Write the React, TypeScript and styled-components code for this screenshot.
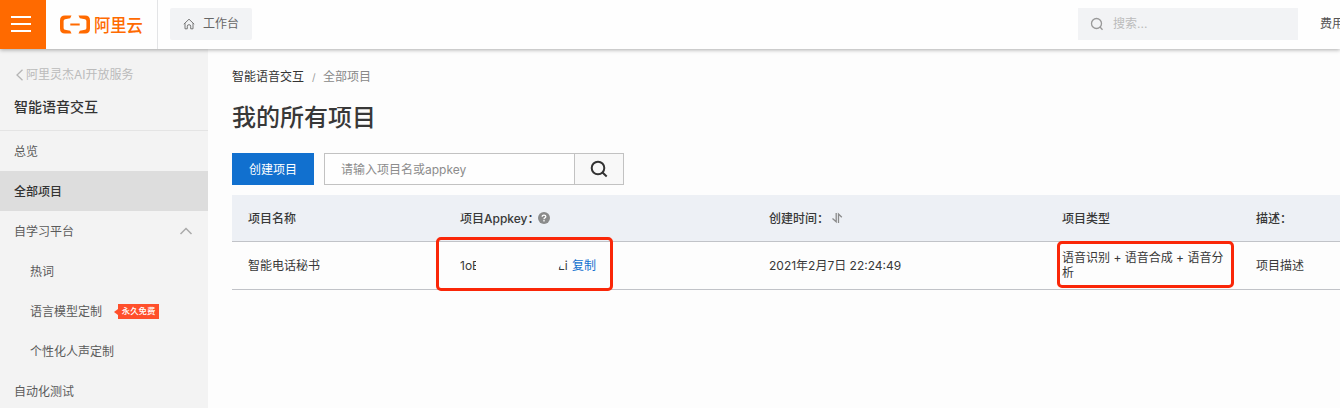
import React from "react";
import styled, { createGlobalStyle, css } from "styled-components";

const Global = createGlobalStyle`
  * { box-sizing: border-box; }
  html, body { margin: 0; padding: 0; overflow: hidden; }
  body {
    background: #fdfdfd;
    color: #383838;
    font: 12px/18px Inter, "Noto Sans CJK SC", sans-serif;
  }
`;

const Page = styled.div`
  width: 1340px;
  height: 408px;
  overflow: hidden;
  display: flex;
  flex-direction: column;
`;

const TopBar = styled.header`
  position: relative;
  z-index: 1;
  flex: none;
  height: 49px;
  display: flex;
  align-items: stretch;
  background: #fefefe;
  box-shadow: 0 1px 4px rgba(0, 0, 0, 0.32);
`;

const MenuButton = styled.button`
  width: 46px;
  border: 0;
  padding: 0 0 1px 11px;
  background: #ff6a00;
  display: flex;
  flex-direction: column;
  justify-content: center;
  gap: 5px;
`;

const MenuLine = styled.span`
  width: 20px;
  height: 2px;
  background: #fff;
`;

const Brand = styled.div`
  width: 112px;
  padding-left: 14px;
  display: flex;
  align-items: center;
  gap: 4px;
  border-right: 1px solid #e3e4e6;
  color: #ff6a00;
`;

const BrandName = styled.span`
  font-size: 16.3px;
  line-height: 24px;
  font-weight: 500;
  white-space: nowrap;
  transform: scaleY(1.1);
`;

const Workbench = styled.div`
  align-self: flex-start;
  margin: 8px 0 0 12px;
  width: 82px;
  height: 32px;
  padding-left: 13px;
  display: flex;
  align-items: center;
  gap: 8px;
  border-radius: 2px;
  background: #f2f3f5;
  color: #666;
`;

const GlobalSearch = styled.div`
  align-self: flex-start;
  margin: 8px 22px 0 auto;
  width: 220px;
  height: 32px;
  padding-left: 12px;
  display: flex;
  align-items: center;
  gap: 9px;
  background: #f2f3f5;
  color: #bbb;
`;

const Billing = styled.span`
  width: 20px;
  overflow: hidden;
  white-space: nowrap;
  line-height: 48px;
  color: #555;
`;

const Body = styled.div`
  flex: 1;
  display: flex;
  min-height: 0;
`;

const Sidebar = styled.nav`
  flex: none;
  width: 208px;
  background: #f3f3f3;
  color: #5a5a5a;
`;

const BackLink = styled.div`
  height: 38px;
  padding: 13px 0 0 15px;
  display: flex;
  align-items: center;
  gap: 2px;
  color: #bbb;
`;

const ServiceTitle = styled.div`
  height: 44px;
  padding: 9px 0 0 14px;
  border-bottom: 1px solid #e4e4e4;
  font-size: 14px;
  line-height: 22px;
  font-weight: 500;
  color: #333;
`;

const NavItem = styled.div<{ $active?: boolean; $nested?: boolean }>`
  height: 40px;
  padding: 2px 15px 0 ${(p) => (p.$nested ? 30 : 14)}px;
  display: flex;
  align-items: center;
  ${(p) =>
    p.$active &&
    css`
      background: #ddd;
      color: #333;
      font-weight: 500;
    `}
`;

const ChevronUp = styled.svg`
  margin: 0 0 2px auto;
`;

const FreeTag = styled.span`
  margin: 0 0 1px 12px;
  display: flex;
  align-items: center;
`;

const TagArrow = styled.svg`
  flex: none;
`;

const TagLabel = styled.span`
  width: 41px;
  height: 15px;
  background: #ff4f2b;
  color: #fff;
  font-size: 8.4px;
  line-height: 15px;
  font-weight: 500;
  text-align: center;
`;

const Main = styled.main`
  flex: 1;
  min-width: 0;
  padding-left: 24px;
`;

const Breadcrumb = styled.div`
  margin-top: 19px;
  display: flex;
  color: #333;
`;

const Slash = styled.span`
  width: 19px;
  padding-left: 8px;
  font-size: 10px;
  color: #999;
`;

const Current = styled.span`
  color: #888;
`;

const PageTitle = styled.h1`
  margin: 14px 0 0;
  font-size: 24px;
  line-height: 36px;
  font-weight: 500;
  color: #383838;
`;

const Toolbar = styled.div`
  margin-top: 17px;
  height: 32px;
  display: flex;
  gap: 10px;
`;

const CreateButton = styled.button`
  width: 82px;
  border: 0;
  padding: 1px 0 0;
  background: #1170cf;
  color: #fff;
  font: inherit;
`;

const SearchBox = styled.div`
  width: 300px;
  display: flex;
  border: 1px solid #c2c2c2;
`;

const SearchField = styled.span`
  flex: 1;
  padding-left: 16px;
  line-height: 31px;
  background: #fefefe;
  color: #8c8c8c;
`;

const SearchButton = styled.span`
  width: 49px;
  display: flex;
  align-items: center;
  justify-content: center;
  border-left: 1px solid #c2c2c2;
  background: #f8f8f8;
`;

const Row = styled.div<{ $head?: boolean }>`
  width: 1140px;
  height: ${(p) => (p.$head ? 47 : 48)}px;
  display: grid;
  grid-template-columns: 212px 309px 293px 194px 132px;
  align-items: center;
  border-bottom: 1px solid #c1c3c8;
  ${(p) =>
    p.$head &&
    css`
      margin-top: 10px;
      background: #edf0f5;
      font-weight: 500;
    `}
`;

const Cell = styled.div`
  position: relative;
  padding: 1px 16px 0;
  display: flex;
  align-items: center;
  white-space: nowrap;
`;

const TypeText = styled.div`
  width: 164px;
  margin: -2px 0 1px;
  white-space: normal;
  line-height: 15px;
`;

const KeyStart = styled.span`
  width: 16px;
  overflow: hidden;
`;

const KeyEnd = styled.span`
  margin: 0 4px 0 82px;
  width: 10px;
  clip-path: polygon(0 12px, 4px 6px, 5px 0, 100% 0, 100% 100%, 0 100%);
`;

const CopyLink = styled.span`
  color: #1170cf;
`;

const Highlight = styled.span<{ $w: number; $h: number; $x: number; $y: number }>`
  position: absolute;
  left: ${(p) => p.$x}px;
  top: ${(p) => p.$y}px;
  width: ${(p) => p.$w}px;
  height: ${(p) => p.$h}px;
  border: 3px solid #fa2708;
  border-radius: 5px;
`;

const Anchor = styled.span`
  position: absolute;
  left: 0;
  top: 50%;
`;

const CellIcon = styled.svg<{ $shift: number }>`
  flex: none;
  margin: 0 0 1px ${(p) => p.$shift}px;
`;

export default function App() {
  return (
    <Page>
      <Global />
      <TopBar>
        <MenuButton aria-label="menu">
          <MenuLine />
          <MenuLine />
          <MenuLine />
        </MenuButton>
        <Brand>
          <svg width="30" height="19" viewBox="0 0 30 19" fill="#ff6a00">
            <path d="M11.500 .5H5Q0 .5 0 5.500V13.500Q0 18.500 5 18.500H11.500L10.200 15.800L5 14.800Q3.600 14.400 3.600 13V6Q3.600 4.600 5 4.200L10.200 3.200Z" />
            <path d="M18.500 .5H25Q30 .5 30 5.500V13.500Q30 18.500 25 18.500H18.500L19.800 15.800L25 14.800Q26.400 14.400 26.400 13V6Q26.400 4.600 25 4.200L19.800 3.200Z" />
            <rect x="10.300" y="8.500" width="9.400" height="2" />
          </svg>
          <BrandName>阿里云</BrandName>
        </Brand>
        <Workbench>
          <svg width="12" height="12" viewBox="0 0 12 12" fill="none" stroke="#777">
            <path d="M.8 6.200L6 1.200L11.200 6.200M2 5.200V10.800H4.300V8.200Q4.300 6.700 6 6.700T7.700 8.200V10.800H10V5.200" />
          </svg>
          工作台
        </Workbench>
        <GlobalSearch>
          <svg width="14" height="14" viewBox="0 0 14 14" fill="none" stroke="#999" strokeWidth="1.300">
            <circle cx="6.500" cy="6.500" r="5" />
            <path d="M10 10L12.500 12.700" />
          </svg>
          搜索...
        </GlobalSearch>
        <Billing>费用</Billing>
      </TopBar>
      <Body>
        <Sidebar>
          <BackLink>
            <svg width="9" height="12" viewBox="0 0 9 12" fill="none" stroke="#b5b5b5" strokeWidth="1.300">
              <path d="M7.500 .7L2 6L7.500 11.300" />
            </svg>
            阿里灵杰AI开放服务
          </BackLink>
          <ServiceTitle>智能语音交互</ServiceTitle>
          <NavItem>总览</NavItem>
          <NavItem $active>全部项目</NavItem>
          <NavItem>
            自学习平台
            <ChevronUp width="14" height="8" viewBox="0 0 14 8" fill="none" stroke="#aaa" strokeWidth="1.500">
              <path d="M1.500 7L7 1.500L12.500 7" />
            </ChevronUp>
          </NavItem>
          <NavItem $nested>热词</NavItem>
          <NavItem $nested>
            语言模型定制
            <FreeTag>
              <TagArrow width="4" height="6" viewBox="0 0 4 6" fill="#ff4f2b">
                <path d="M4 0L0 3L4 6Z" />
              </TagArrow>
              <TagLabel>永久免费</TagLabel>
            </FreeTag>
          </NavItem>
          <NavItem $nested>个性化人声定制</NavItem>
          <NavItem>自动化测试</NavItem>
        </Sidebar>
        <Main>
          <Breadcrumb>
            智能语音交互<Slash>/</Slash>
            <Current>全部项目</Current>
          </Breadcrumb>
          <PageTitle>我的所有项目</PageTitle>
          <Toolbar>
            <CreateButton>创建项目</CreateButton>
            <SearchBox>
              <SearchField>请输入项目名或appkey</SearchField>
              <SearchButton>
                <svg width="18" height="18" viewBox="0 0 18 18" fill="none" stroke="#333" strokeWidth="2">
                  <circle cx="8" cy="8" r="6.300" />
                  <path d="M12.500 12.500L16.700 16.500" />
                </svg>
              </SearchButton>
            </SearchBox>
          </Toolbar>
          <Row $head>
            <Cell>项目名称</Cell>
            <Cell>
              项目Appkey：
              <CellIcon $shift={-2} width="12" height="12" viewBox="0 0 12 12">
                <circle cx="6" cy="6" r="6" fill="#8b8b8b" />
                <path d="M4.200 4.700Q4.200 3.100 6 3.100T7.800 4.600Q7.800 5.500 6.900 5.900Q6 6.300 6 7.200M6 8.100V9.500" fill="none" stroke="#fff" strokeWidth="1.300" />
              </CellIcon>
            </Cell>
            <Cell>
              创建时间：
              <CellIcon $shift={3} width="11" height="12" viewBox="0 0 11 12" fill="none" stroke="#8b8b8b" strokeWidth="1.300">
                <path d="M.5 6.500L4.200 9.800V1M6.500 11V2L9.800 5.300" />
              </CellIcon>
            </Cell>
            <Cell>项目类型</Cell>
            <Cell>描述：</Cell>
          </Row>
          <Row>
            <Cell>智能电话秘书</Cell>
            <Cell>
              <KeyStart>1oE</KeyStart>
              <KeyEnd>Li</KeyEnd>
              <CopyLink>复制</CopyLink>
              <Anchor>
                <Highlight $x={-8} $y={-29} $w={177} $h={54} />
              </Anchor>
            </Cell>
            <Cell>2021年2月7日 22:24:49</Cell>
            <Cell>
              <TypeText>语音识别 + 语音合成 + 语音分析</TypeText>
              <Anchor>
                <Highlight $x={11} $y={-25} $w={177} $h={47} />
              </Anchor>
            </Cell>
            <Cell>项目描述</Cell>
          </Row>
        </Main>
      </Body>
    </Page>
  );
}
